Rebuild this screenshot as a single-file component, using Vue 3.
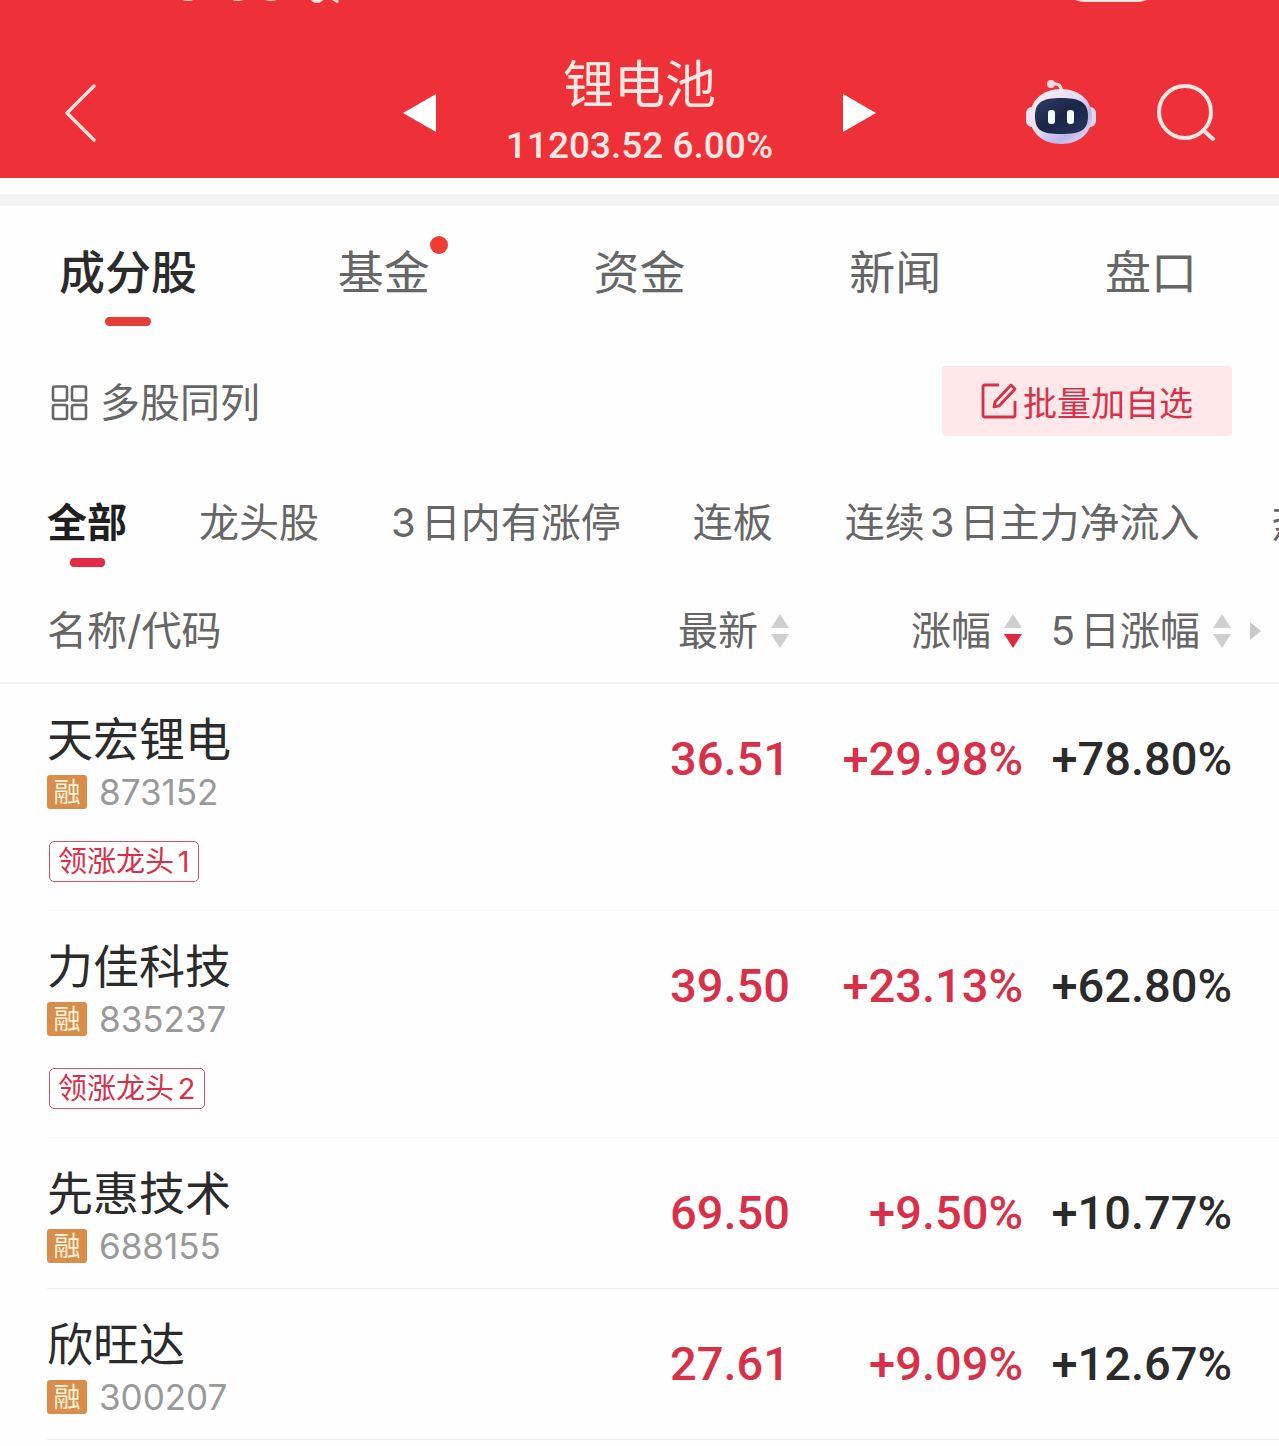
<script setup>
import { ref } from 'vue'

const tabs = [
  { name: '成分股' },
  { name: '基金', dot: true },
  { name: '资金' },
  { name: '新闻' },
  { name: '盘口' },
]
const filters = ['全部', '龙头股', '3日内有涨停', '连板', '连续3日主力净流入', '热门股']
const columns = [
  { key: 'price', label: '最新', sort: '' },
  { key: 'change', label: '涨幅', sort: 'down' },
  { key: 'five', label: '5日涨幅', sort: '' },
]
const stocks = [
  { name: '天宏锂电', code: '873152', tag: '领涨龙头1', price: '36.51', change: '+29.98%', five: '+78.80%' },
  { name: '力佳科技', code: '835237', tag: '领涨龙头2', price: '39.50', change: '+23.13%', five: '+62.80%' },
  { name: '先惠技术', code: '688155', price: '69.50', change: '+9.50%', five: '+10.77%' },
  { name: '欣旺达', code: '300207', price: '27.61', change: '+9.09%', five: '+12.67%' },
]
const activeTab = ref('成分股')
const activeFilter = ref('全部')
</script>

<template>
  <div class="page">
    <header class="header">
      <div class="status" aria-hidden="true">
        <svg class="clock" width="170" height="4" viewBox="0 0 170 4" fill="#ffe3e0">
          <ellipse cx="16" cy="-2" rx="8" ry="3" />
          <ellipse cx="66" cy="-2" rx="8" ry="3" />
          <ellipse cx="99" cy="-2" rx="8" ry="3" />
          <ellipse cx="145" cy="-1" rx="6" ry="4" />
          <path d="M160 0h6l1 2-2 1z" />
        </svg>
        <svg width="72" height="4" viewBox="0 0 72 4" fill="#ffe3e0">
          <path d="M0 0h72q-5 2-10 2H10Q5 2 0 0z" />
        </svg>
      </div>
      <button class="icon-btn" aria-label="返回">
        <svg width="32" height="60" viewBox="0 0 32 60" fill="none" stroke="#ffe1dc" stroke-width="3.4" stroke-linecap="round" stroke-linejoin="round">
          <path d="M30 3 3 30l27 27" />
        </svg>
      </button>
      <div class="switcher">
        <button class="icon-btn" aria-label="上一个">
          <svg width="33" height="38" viewBox="0 0 33 38" fill="#fff"><path d="M33 0v38L0 19z" /></svg>
        </button>
        <div class="heading">
          <h1>锂电池</h1>
          <p>11203.52 6.00%</p>
        </div>
        <button class="icon-btn" aria-label="下一个">
          <svg width="33" height="38" viewBox="0 0 33 38" fill="#fff"><path d="M0 0v38l33-19z" /></svg>
        </button>
      </div>
      <div class="actions">
        <button class="icon-btn" aria-label="智能助手">
          <svg width="70" height="66" viewBox="0 0 70 66">
            <defs>
              <linearGradient id="shell" x1="0" y1="0" x2="1" y2="1">
                <stop offset="0" stop-color="#fff4f3" />
                <stop offset=".45" stop-color="#e6dcf4" />
                <stop offset=".7" stop-color="#b9b6ea" />
                <stop offset="1" stop-color="#f8dfec" />
              </linearGradient>
              <linearGradient id="visor" x1="0" y1="0" x2="1" y2="1">
                <stop offset="0" stop-color="#2f3c63" />
                <stop offset=".5" stop-color="#1b2547" />
                <stop offset="1" stop-color="#28365f" />
              </linearGradient>
            </defs>
            <path d="M26 4c6-1 9 1 10 8" fill="none" stroke="#ffdfe0" stroke-width="3" stroke-linecap="round" />
            <circle cx="25" cy="4" r="4" fill="#ffd9dc" />
            <rect x="0" y="27" width="12" height="20" rx="6" fill="#f8e4ee" />
            <rect x="58" y="27" width="12" height="20" rx="6" fill="#e3d6f0" />
            <path d="M35 9c19 0 31 12 31 28S53 64 35 64 4 53 4 37 16 9 35 9z" fill="url(#shell)" />
            <path d="M35 18c18 0 27 4 27 18s-7 18-27 18S9 50 9 36s8-18 26-18z" fill="url(#visor)" />
            <rect x="22" y="30" width="7" height="14" rx="3" fill="#f2fbff" />
            <rect x="41" y="30" width="7" height="14" rx="3" fill="#f2fbff" />
          </svg>
        </button>
        <button class="icon-btn" aria-label="搜索">
          <svg width="58" height="58" viewBox="0 0 58 58" fill="none" stroke="#ffe6e2" stroke-width="4" stroke-linecap="round">
            <circle cx="28" cy="28" r="26" />
            <path d="m46 46 10 9" />
          </svg>
        </button>
      </div>
    </header>

    <div class="band"></div>

    <nav class="tabs">
      <button
        v-for="t in tabs"
        :key="t.name"
        class="tab"
        :class="{ active: t.name === activeTab }"
        @click="activeTab = t.name"
      >
        <span class="tab-label">{{ t.name }}<i v-if="t.dot" class="dot"></i></span>
      </button>
    </nav>

    <div class="tools">
      <button class="multi">
        <svg width="38" height="36" viewBox="0 0 38 36" fill="none" stroke="#666" stroke-width="2.6">
          <rect x="3" y="1.5" width="14" height="14" rx="2" />
          <rect x="22" y="1.5" width="14" height="14" rx="2" />
          <rect x="3" y="20" width="14" height="14" rx="2" />
          <rect x="22" y="20" width="14" height="14" rx="2" />
        </svg>
        多股同列
      </button>
      <button class="batch">
        <svg width="36" height="36" viewBox="0 0 36 36" fill="none" stroke="#d8304a" stroke-width="2.8" stroke-linejoin="round">
          <path d="M18 2H4Q2 2 2 4v28q0 2 2 2h28q2 0 2-2V18" />
          <path d="m30 2 4 4-16 17-5 1 1-5z" />
        </svg>
        批量加自选
      </button>
    </div>

    <nav class="filters">
      <button
        v-for="f in filters"
        :key="f"
        class="filter"
        :class="{ active: f === activeFilter }"
        @click="activeFilter = f"
      >{{ f }}</button>
    </nav>

    <table class="list">
      <thead>
        <tr>
          <th class="name" scope="col">名称/代码</th>
          <th v-for="c in columns" :key="c.key" :class="c.key" scope="col">
            <button class="sort">
              {{ c.label }}
              <svg width="20" height="34" viewBox="0 0 20 34" fill="#cfcfcf">
                <path d="M10 0l9 14H1z" />
                <path d="M1 20h18l-9 14z" :fill="c.sort === 'down' ? '#e0283f' : '#cfcfcf'" />
              </svg>
            </button>
          </th>
          <th class="more" scope="col">
            <button class="icon-btn" aria-label="更多列">
              <svg width="11" height="18" viewBox="0 0 11 18" fill="#c8c8c8"><path d="M0 0l11 9-11 9z" /></svg>
            </button>
          </th>
        </tr>
      </thead>
      <tbody>
        <tr v-for="s in stocks" :key="s.code" :class="{ tagged: s.tag }">
          <td class="name">
            <div class="stock">{{ s.name }}</div>
            <div class="code"><span class="badge">融</span>{{ s.code }}</div>
            <div v-if="s.tag" class="tag">{{ s.tag }}</div>
          </td>
          <td class="price up">{{ s.price }}</td>
          <td class="change up">{{ s.change }}</td>
          <td class="five">{{ s.five }}</td>
        </tr>
      </tbody>
    </table>
  </div>
</template>

<style>
body {
  background: #fefefe;
  overflow-x: hidden;
}
</style>

<style scoped>
.page {
  font-family: Inter, "Noto Sans CJK SC", sans-serif;
  color: #666;
  text-autospace: normal;
}
button {
  border: 0;
  padding: 0;
  margin: 0;
  background: none;
  font: inherit;
  color: inherit;
}
svg {
  display: block;
  flex: none;
}
.header {
  position: relative;
  display: grid;
  grid-template-columns: 1fr 474px 1fr;
  align-items: center;
  padding: 48px 64px 0;
  height: 130px;
  background: #ee3038;
}
.status {
  position: absolute;
  inset: 0 132px auto 172px;
  display: flex;
  justify-content: space-between;
}
.switcher,
.actions {
  display: flex;
  align-items: center;
}
.switcher {
  justify-content: space-between;
}
.actions {
  justify-content: flex-end;
  gap: 61px;
}
.heading {
  text-align: center;
  color: #ffe8e3;
}
.heading h1 {
  margin: 0;
  font-size: 51px;
  line-height: 66px;
  font-weight: 400;
}
.heading p {
  margin: 0;
  font: 500 37px/56px Roboto, sans-serif;
}
.band {
  height: 12px;
  margin-top: 16px;
  background: #f4f4f4;
}
.tabs {
  display: grid;
  grid-template-columns: repeat(5, 1fr);
}
.tab {
  display: flex;
  flex-direction: column;
  align-items: center;
  padding-top: 34px;
  height: 120px;
  font-size: 46px;
  line-height: 64px;
}
.tab.active {
  color: #2b2b2b;
  font-weight: 500;
}
.tab.active::after {
  content: "";
  width: 46px;
  height: 9px;
  margin-top: 13px;
  border-radius: 5px;
  background: #e43d38;
}
.tab-label {
  position: relative;
}
.dot {
  position: absolute;
  top: -4px;
  right: -18px;
  width: 18px;
  height: 18px;
  border-radius: 50%;
  background: #ee3b35;
}
.tools {
  display: flex;
  justify-content: space-between;
  align-items: center;
  padding: 40px 47px 0 50px;
}
.multi {
  display: flex;
  align-items: center;
  gap: 12px;
  padding-top: 3px;
  font-size: 40px;
  line-height: 56px;
}
.batch {
  display: flex;
  align-items: center;
  justify-content: center;
  gap: 6px;
  width: 290px;
  height: 70px;
  border-radius: 3px;
  background: #ffe8e9;
  color: #d8304a;
  font-size: 34px;
}
.filters {
  display: flex;
  gap: 72px;
  padding: 59px 0 0 47px;
  overflow: hidden;
}
.filter {
  display: flex;
  flex: none;
  flex-direction: column;
  align-items: center;
  height: 84px;
  font-size: 40px;
  line-height: 56px;
  white-space: nowrap;
}
.filter.active {
  color: #1f1f1f;
  font-weight: 700;
}
.filter.active::after {
  content: "";
  width: 35px;
  height: 9px;
  margin-top: 7px;
  border-radius: 4px;
  background: #e22b45;
}
.list,
.list thead,
.list tbody {
  display: block;
}
.list tr {
  display: flex;
  align-items: flex-start;
}
.list thead tr {
  align-items: center;
  height: 103px;
  padding-left: 47px;
  border-bottom: 2px solid #f3f3f3;
}
.list th {
  padding: 0;
  font-size: 40px;
  line-height: 56px;
  font-weight: 400;
  text-align: left;
}
.list td {
  padding: 0;
}
.list .name {
  flex: 1;
}
.sort {
  display: flex;
  align-items: center;
  gap: 12px;
  margin-left: auto;
  white-space: nowrap;
}
.price {
  width: 160px;
}
.change {
  width: 233px;
}
.five {
  width: 209px;
}
.more {
  display: flex;
  width: 47px;
}
.more .icon-btn {
  margin-left: 18px;
}
.list tbody tr {
  margin-left: 47px;
  padding-right: 47px;
  border-bottom: 1px solid #ededed;
}
.list tbody tr.tagged {
  border-color: #f7f7f7;
}
.list tbody .name {
  padding: 23px 0 25px;
}
.list td.price,
.list td.change,
.list td.five {
  font: 500 47px/150px Roboto, sans-serif;
  text-align: right;
  color: #2b2b2b;
}
.list td.up {
  color: #d9304a;
}
.stock {
  font-size: 46px;
  line-height: 64px;
  color: #2b2b2b;
}
.code {
  display: flex;
  align-items: center;
  gap: 12px;
  margin-top: 4px;
  font-size: 35px;
  line-height: 34px;
  color: #999;
}
.badge {
  width: 40px;
  border-radius: 3px;
  background: #d98d4a;
  color: #fff3dc;
  font-size: 27px;
  line-height: 36px;
  height: 34px;
  text-align: center;
}
.tag {
  width: max-content;
  margin: 32px 0 3px 2px;
  padding: 0 9px 0 8px;
  border: 1px solid #d0536a;
  border-radius: 5px;
  color: #d8304a;
  font-size: 29px;
  line-height: 39px;
}
</style>
